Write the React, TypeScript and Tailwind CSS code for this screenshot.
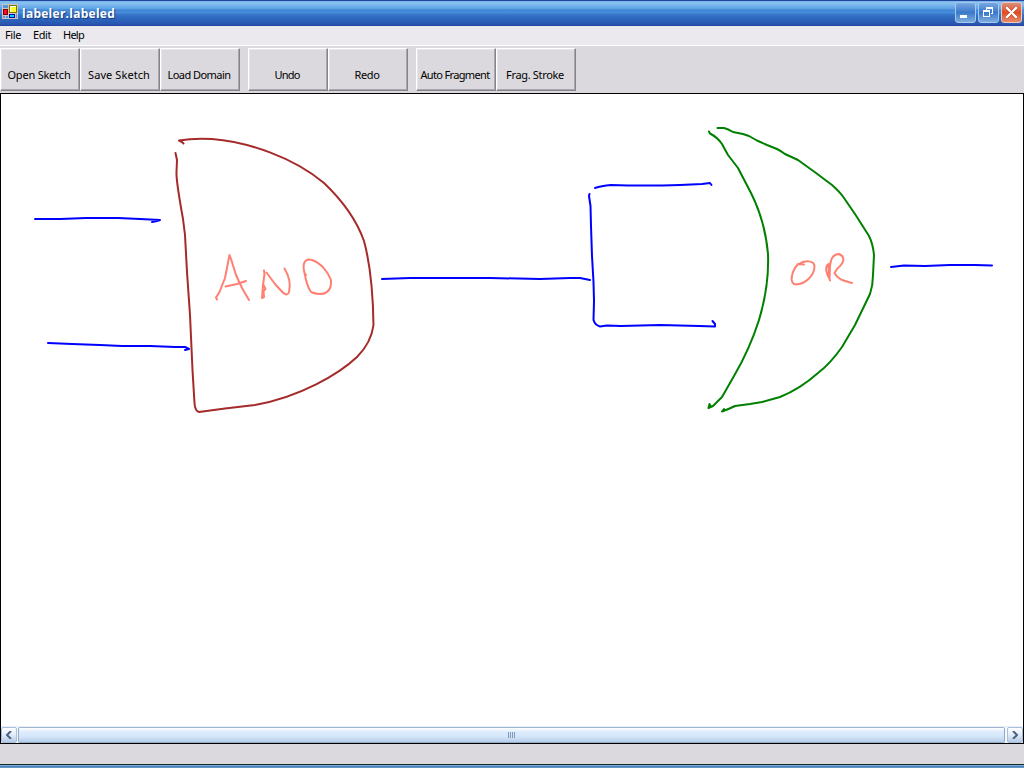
import React from "react";

const groups = [
  [
    { label: "Open Sketch", width: 63 },
    { label: "Save Sketch", width: 62 },
    { label: "Load Domain", width: 63 },
  ],
  [
    { label: "Undo", width: 25 },
    { label: "Redo", width: 25 },
  ],
  [
    { label: "Auto Fragment", width: 69 },
    { label: "Frag. Stroke", width: 58 },
  ],
];

const menus = [
  { label: "File", width: 16 },
  { label: "Edit", width: 18 },
  { label: "Help", width: 21 },
];

function FitText({ label, width }: { label: string; width: number }) {
  const ref = React.useRef<HTMLSpanElement>(null);
  const [spacing, setSpacing] = React.useState(0);
  React.useLayoutEffect(() => {
    if (ref.current) {
      const natural = ref.current.getBoundingClientRect().width;
      setSpacing((width - natural) / label.length);
    }
  }, [label, width]);
  return (
    <span ref={ref} className="whitespace-nowrap" style={{ letterSpacing: spacing }}>
      {label}
    </span>
  );
}

function AppIcon() {
  return (
    <svg width="16" height="16" viewBox="0 0 16 16" shapeRendering="crispEdges">
      <path d="M0 0h16v15H0z" fill="#c9c5bd" />
      <path d="M1 1h5v3H1zM1 12h2v2H1zM4 12h2v2H4zM14 10h1v4h-1z" fill="#5795dc" />
      <path d="M1 5h5v6H1z" fill="#800000" />
      <path d="M2 6h3v4H2z" fill="#ff0030" />
      <path d="M7 1h8v8H7z" fill="#7b7500" />
      <path d="M8 2h6v6H8z" fill="#fff" />
      <path d="M9 3h5v5H9z" fill="#ffff20" />
      <path d="M7 10h6v4H7z" fill="#0000c0" />
      <path d="M8 11h4v2H8z" fill="#00d8ff" />
    </svg>
  );
}

function CaptionButton({ kind }: { kind: "min" | "restore" | "close" }) {
  const close = kind === "close";
  return (
    <div
      className={
        close
          ? "h-[21px] w-[21px] rounded-[3px] border border-[#f3c5ba] bg-linear-to-b from-[#d88d7c] via-[#df4d22] to-[#e18a6b]"
          : "h-[21px] w-[21px] rounded-[3px] border border-[#a5c9f1] bg-linear-to-b from-[#78a8e2] via-[#3a78c9] to-[#7dadde]"
      }
    >
      <svg width="19" height="19" viewBox="-1 0 19 19" shapeRendering="crispEdges" className="block">
        {kind === "min" && <path d="M3 12h7v3H3z" fill="#fff" />}
        {kind === "restore" && (
          <path
            fill="#fff"
            fillRule="evenodd"
            d="M3 7h7v7H3zM4 9v4h5V9zM6 4h7v2H6zM6 6h1v1H6zM12 6h1v5h-2v-1h1z"
          />
        )}
        {close && (
          <path
            fill="#fff"
            d="M3 4h2v1H3zM12 4h2v1h-2zM3 5h3v1H3zM11 5h3v1h-3zM4 6h3v1H4zM10 6h3v1h-3zM5 7h3v1H5zM9 7h3v1H9zM6 8h5v1H6zM7 9h3v1H7zM6 10h5v1H6zM5 11h3v1H5zM9 11h3v1H9zM4 12h3v1H4zM10 12h3v1h-3zM3 13h3v1H3zM11 13h3v1h-3zM3 14h2v1H3zM12 14h2v1h-2z"
          />
        )}
      </svg>
    </div>
  );
}

function TitleBar() {
  return (
    <header className="flex h-[26px] items-start border-t border-b border-t-[#2444a0] border-b-[#2347a0] bg-[linear-gradient(to_bottom,#70b4e8_0px,#8bc3f1_2px,#5aa0e3_8px,#3e81d3_9px,#4990dc_11px,#3474c7_14px,#2b5fb7_20px,#2752ad_24px)]">
      <div className="flex h-6 flex-1 items-center pl-[2px]">
        <div className="h-[18px]">
          <AppIcon />
        </div>
        <div className="ml-1 pt-px font-['Open_Sans','Noto_Sans',sans-serif] text-[12px] leading-4 font-bold text-white [text-shadow:1px_1px_1px_#173b83]">
          <FitText label="labeler.labeled" width={93} />
        </div>
      </div>
      <div className="mr-[2px] flex gap-[2px] pt-px">
        <CaptionButton kind="min" />
        <CaptionButton kind="restore" />
        <CaptionButton kind="close" />
      </div>
    </header>
  );
}

function Sketch() {
  return (
    <svg width="1022" height="632" viewBox="1 94 1022 632" className="block" fill="none" strokeWidth="2" strokeLinecap="round" strokeLinejoin="round">
      <g stroke="#0000ff">
        <path d="M35 219L60 219L86 218L118 218L140 219L160 220L157 221L152 222" />
        <path d="M48 343L72 344L100 345L122 346L150 346L175 347L185 347L189 349L185 350" />
        <path d="M382 279L410 278L450 278L490 278L540 279L570 278L580 278L590 280" />
        <path d="M595 188Q601 186 611 185Q645 186 680 185L702 184L710 183L711.5 185" />
        <path d="M589.5 194L589 196L590.5 206L591 226L592 256L593.5 282L594 301L593.5 320Q595 325 600 326.5L607 325.5L621 326L660 325L699 326L715 326.5L715 324L712.5 321" />
        <path d="M891 267L904 265.5L925 266L950 265L975 265L992 265.5" />
      </g>
      <g stroke="#a52a2a">
        <path d="M183.5 143.5L182 142L179 140.5Q193 138 212 139C248 142 293 157 324 183C345 203 358 224 364 241C370 263 373 290 373.5 325C372 337 367 347 357 357C339 374 300 397 255 405L225 408.5L199 412Q195 411 194.5 403L192.5 370L190 315L187 272L185 235L183 219Q176 180 176.5 172L177 160L175.5 153" />
      </g>
      <g stroke="#008000">
        <path d="M717.5 128L724 128Q728 129 733 132L743 134L749 136L757 140.5L767 145L777 149Q781 151 785 154L798 160L816 173L832 185Q840 192 844 198L855 214L869 236Q873 244 874 255L873 275Q873 285 870 294L855 325L842 347Q830 364 818 373Q800 389 780 397L762 402L750 404L735 406Q729 409 722 411.5L724 409" />
        <path d="M709 131.5L710 133.5Q717 137 722 144L728 155L738 168L751 193C760 211 766 230 768 254C769 279 765 300 759 320C752 342 744 359 734 376L722 397L713 406L708.5 408L709.5 404L711 407" />
      </g>
      <g stroke="#ff8072">
        <path d="M217 299.5L216 297.5L217 296L219.5 292L225 278L229.5 255L231 259L236 275L242 288L249 300M225.5 286.5L237 284L246 281" />
        <path d="M264 270.5L264.5 274L263 285L262 298L264 297L263.5 291L265.5 289L263.5 285M266.5 272.5L275 284C282 292 287 298 289 292C291 284 289 276 284.5 268.5" />
        <path d="M306 275L304.5 273C302 263 305 258 312 260C321 263 328 272 331 280C332 291 325 297 312 292.5M304.5 273C306 281 308 288 311 292" />
        <path d="M804 264.5L798 264C791 272 789 284 796 284.5C805 284 814 276 814.5 267C815 260 804 260 799 264" />
        <path d="M830 280.5L829 276L828.5 264C824 267 827 275 829.5 279L830 266Q831 254 839 254C846 257 844 263 837 269L834.5 273C838 280 845 281 852 283" />
      </g>
    </svg>
  );
}

function ArrowBox({ dir }: { dir: "left" | "right" }) {
  return (
    <div className="flex h-4 w-4 items-center justify-center rounded-[2px] border border-[#a8c0dc] bg-linear-to-b from-white via-[#dfebf9] to-[#b4cae4]">
      <svg width="8" height="8" viewBox="0 0 8 8" fill="none" stroke="#4d6185" strokeWidth="2">
        {dir === "left" ? <path d="M6 0L2 4L6 8" /> : <path d="M2 0L6 4L2 8" />}
      </svg>
    </div>
  );
}

function ScrollBar() {
  return (
    <div className="flex h-[17px] items-end border-t border-[#e9eff6] bg-[#f5f9fe]">
      <ArrowBox dir="left" />
      <div className="ml-px flex h-4 flex-1 items-center justify-center rounded-[2px] border border-[#91abc9] border-t-[#9eb4cf] bg-[linear-gradient(to_bottom,#fff,#dceafb_4px,#d7e8fb_8px,#b7cee7)]">
        <svg width="8" height="6" viewBox="0 0 8 6" shapeRendering="crispEdges">
          <path d="M0 0h1v6H0zM2 0h1v6H2zM4 0h1v6H4zM6 0h1v6H6z" fill="#7c98bd" />
        </svg>
      </div>
      <div className="ml-[2px]">
        <ArrowBox dir="right" />
      </div>
    </div>
  );
}

export default function App() {
  return (
    <div className="flex h-[768px] w-[1024px] flex-col overflow-hidden bg-[#dbd9dd] font-['Noto_Sans','Open_Sans',sans-serif] text-[11px] leading-4 text-black">
      <TitleBar />
      <nav className="flex h-5 gap-3 border-b border-white bg-[#ebe9ed] pt-px pl-[5px]">
        {menus.map((m) => (
          <FitText key={m.label} label={m.label} width={m.width} />
        ))}
      </nav>
      <div className="flex h-[47px] gap-2 pt-[2px]">
        {groups.map((group, i) => (
          <div key={i} className="flex">
            {group.map((b) => (
              <div
                key={b.label}
                className="flex h-[43px] w-20 items-start justify-center border border-t-white border-r-[#86848a] border-b-[#86848a] border-l-white pt-[18px] pr-[2px] shadow-[inset_-1px_-1px_0_#aaa8ae,inset_1px_1px_0_#e8e6ea]"
              >
                <FitText label={b.label} width={b.width} />
              </div>
            ))}
          </div>
        ))}
      </div>
      <main className="h-[651px] border border-black bg-white">
        <Sketch />
        <ScrollBar />
      </main>
      <footer className="flex-1" />
      <div className="h-1 border-t border-[#102b27] bg-[linear-gradient(to_bottom,#80acd6_0px,#80acd6_1px,#4b7fb9_1px,#4b7fb9_2px,#6196c5_2px)]" />
    </div>
  );
}
